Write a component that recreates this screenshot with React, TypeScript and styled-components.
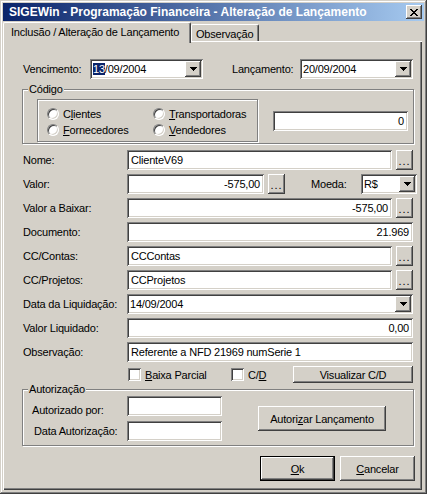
import React from "react";
import styled, { createGlobalStyle, css } from "styled-components";

const FACE = "#d4d0c8";
const FONT = `"Liberation Sans", Arial, Helvetica, sans-serif`;

const Global = createGlobalStyle`
  html, body { margin: 0; padding: 0; background: ${FACE}; }
  body { font-family: ${FONT}; font-size: 11px; color: #000; letter-spacing: -0.2px; }
  * { box-sizing: border-box; }
  u { text-decoration: underline; text-underline-offset: 1px; }
`;

const sunken = css`
  background: #fff;
  box-shadow: inset 1px 1px #808080, inset -1px -1px #fff, inset 2px 2px #404040,
    inset -2px -2px ${FACE};
`;

const raised = css`
  background: ${FACE};
  box-shadow: inset -1px -1px #404040, inset 1px 1px #fff, inset -2px -2px #808080;
`;

const etched = css`
  border: 1px solid #808080;
  box-shadow: inset 1px 1px #fff, 1px 1px #fff;
`;

const Window = styled.div`
  width: 427px;
  height: 494px;
  padding: 3px;
  background: ${FACE};
  box-shadow: inset -1px -1px #404040, inset 1px 1px ${FACE}, inset -2px -2px #808080,
    inset 2px 2px #fff;
  display: flex;
  flex-direction: column;
`;

const TitleBar = styled.div`
  height: 18px;
  margin-bottom: 1px;
  display: flex;
  align-items: center;
  padding: 0 2px 0 6px;
  background: linear-gradient(to right, #0a246a, #a6caf0);
`;

const TitleText = styled.span`
  flex: 1;
  color: #fff;
  font-weight: bold;
  font-size: 12px;
  letter-spacing: 0;
  white-space: nowrap;
`;

const CloseButton = styled.span`
  ${raised};
  width: 16px;
  height: 14px;
  display: flex;
  align-items: center;
  justify-content: center;
  padding: 0 1px 0 0;
`;

const Body = styled.div`
  flex: 1;
  display: flex;
  flex-direction: column;
  padding: 0 2px 1px 0;
`;

const TabStrip = styled.div`
  height: 19px;
  display: flex;
  align-items: flex-end;
  position: relative;
  z-index: 2;
`;

const Tab = styled.div<{ $active?: boolean; $w: number }>`
  width: ${(p) => p.$w}px;
  height: ${(p) => (p.$active ? 21 : 17)}px;
  margin-bottom: ${(p) => (p.$active ? -2 : 0)}px;
  background: ${FACE};
  border-top: 1px solid #fff;
  border-left: 1px solid #fff;
  border-right: 1px solid #404040;
  border-radius: 2px 2px 0 0;
  box-shadow: inset -1px 0 #808080;
  display: flex;
  align-items: center;
  padding: ${(p) => (p.$active ? "0 0 2px 7px" : "1px 0 0 4px")};
  white-space: nowrap;
`;

const TabPanel = styled.div`
  flex: 1;
  position: relative;
  z-index: 1;
  background: ${FACE};
  box-shadow: inset 1px 1px #fff, inset -1px -1px #404040, inset -2px -2px #808080;
  padding: 18px 7px 0 19px;
  display: flex;
  flex-direction: column;
`;

const TopRow = styled.div`
  height: 20px;
  display: flex;
  align-items: center;
  padding-right: 2px;
`;

const Label = styled.span<{ $w?: number; $ml?: number; $dy?: number; $pl?: number }>`
  ${(p) => (p.$w ? `width: ${p.$w}px; flex: none;` : "")}
  margin-left: ${(p) => p.$ml ?? 0}px;
  padding-left: ${(p) => p.$pl ?? 1}px;
  padding-top: ${(p) => p.$dy ?? 0}px;
  display: flex;
  align-items: center;
  white-space: nowrap;
`;

const ComboBox = styled.div<{ $w?: number }>`
  ${sunken};
  ${(p) => (p.$w ? `width: ${p.$w}px; flex: none;` : "flex: 1;")}
  height: 20px;
  padding: 2px;
  display: flex;
  align-items: center;
`;

const ComboText = styled.span`
  flex: 1;
  padding-left: 1px;
  white-space: nowrap;
  overflow: hidden;
`;

const Selected = styled.span`
  background: #0a246a;
  color: #fff;
`;

const DropButton = styled.span`
  ${raised};
  width: 16px;
  height: 16px;
  flex: none;
  display: flex;
  align-items: center;
  justify-content: center;
`;

const GroupBox = styled.div<{ $mt: number }>`
  ${etched};
  position: relative;
  margin-top: ${(p) => p.$mt}px;
  margin-right: 1px;
`;

const GroupCaption = styled.span`
  position: absolute;
  top: -7px;
  left: 5px;
  padding: 0 1px;
  line-height: 13px;
  background: ${FACE};
`;

const CodeBody = styled.div`
  display: flex;
  align-items: center;
  padding: 9px 0 1px 14px;
`;

const RadioBox = styled.div`
  ${etched};
  width: 221px;
  height: 43px;
  padding: 6px 0 0 9px;
  display: grid;
  grid-template-columns: 106px 1fr;
  grid-auto-rows: 16px;
`;

const RadioItem = styled.label`
  display: flex;
  align-items: center;
  gap: 4px;
  white-space: nowrap;
`;

const RadioCircle = styled.span`
  width: 12px;
  height: 12px;
  flex: none;
  border-radius: 50%;
  background: #fff;
  border: 1px solid;
  border-color: #808080 #fff #fff #808080;
  box-shadow: inset 1px 1px #404040, inset -1px -1px ${FACE};
`;

const TextBox = styled.div<{ $w?: number; $right?: boolean; $h?: number }>`
  ${sunken};
  ${(p) => (p.$w ? `width: ${p.$w}px; flex: none;` : "flex: 1;")}
  height: ${(p) => p.$h ?? 20}px;
  padding: 0 4px;
  display: flex;
  align-items: center;
  justify-content: ${(p) => (p.$right ? "flex-end" : "flex-start")};
  white-space: nowrap;
  overflow: hidden;
`;

const CodeInput = styled(TextBox)`
  margin-left: 15px;
`;

const FieldGrid = styled.div`
  margin-top: 6px;
  padding-right: 2px;
  display: grid;
  grid-template-columns: 105px 1fr;
  grid-auto-rows: 20px;
  row-gap: 4px;
`;

const FieldControls = styled.div<{ $gap?: number }>`
  display: flex;
  align-items: center;
  gap: ${(p) => p.$gap ?? 4}px;
  min-width: 0;
`;

const Button = styled.button<{ $w: number; $h: number; $default?: boolean; $ml?: number }>`
  ${raised};
  width: ${(p) => p.$w}px;
  height: ${(p) => p.$h}px;
  flex: none;
  margin-left: ${(p) => p.$ml ?? 0}px;
  border: ${(p) => (p.$default ? "1px solid #000" : "none")};
  padding: 0;
  font: inherit;
  letter-spacing: inherit;
  color: #000;
  display: flex;
  align-items: center;
  justify-content: center;
  white-space: nowrap;
`;

const EllipsisButton = styled(Button)`
  align-items: flex-end;
  padding-bottom: 4px;
  letter-spacing: 1px;
  line-height: 10px;
`;

const CheckRow = styled.div`
  display: flex;
  align-items: flex-start;
  height: 20px;
`;

const CheckItem = styled.label<{ $w: number; $pl?: number }>`
  width: ${(p) => p.$w}px;
  height: 17px;
  padding-left: ${(p) => p.$pl ?? 0}px;
  display: flex;
  align-items: center;
  gap: 4px;
  white-space: nowrap;
`;

const CheckBox = styled.span`
  ${sunken};
  width: 13px;
  height: 13px;
  flex: none;
`;

const AuthBody = styled.div`
  display: flex;
  align-items: center;
  padding: 6px 0 4px 9px;
`;

const AuthGrid = styled.div`
  display: grid;
  grid-template-columns: 95px 95px;
  grid-auto-rows: 20px;
  row-gap: 5px;
`;

const DialogButtons = styled.div`
  margin-top: 10px;
  display: flex;
  justify-content: flex-end;
  gap: 5px;
`;

const CloseGlyph = () => (
  <svg width="8" height="7" viewBox="0 0 8 7" shapeRendering="crispEdges">
    <path
      fill="#000"
      d="M0 0h2v1H0z M6 0h2v1H6z M1 1h2v1H1z M5 1h2v1H5z M2 2h4v1H2z M3 3h2v1H3z M2 4h4v1H2z M1 5h2v1H1z M5 5h2v1H5z M0 6h2v1H0z M6 6h2v1H6z"
    />
  </svg>
);

const Arrow = () => (
  <svg width="7" height="4" viewBox="0 0 7 4" shapeRendering="crispEdges">
    <path fill="#000" d="M0 0h7v1H0z M1 1h5v1H1z M2 2h3v1H2z M3 3h1v1H3z" />
  </svg>
);

const Combo: React.FC<{ w?: number; children: React.ReactNode }> = ({ w, children }) => (
  <ComboBox $w={w}>
    <ComboText>{children}</ComboText>
    <DropButton>
      <Arrow />
    </DropButton>
  </ComboBox>
);

const Dots = () => (
  <EllipsisButton $w={17} $h={20}>
    ...
  </EllipsisButton>
);

export default function App() {
  return (
    <>
      <Global />
      <Window>
        <TitleBar>
          <TitleText>SIGEWin - Programação Financeira - Alteração de Lançamento</TitleText>
          <CloseButton>
            <CloseGlyph />
          </CloseButton>
        </TitleBar>
        <Body>
          <TabStrip>
            <Tab $active $w={188}>
              Inclusão / Alteração de Lançamento
            </Tab>
            <Tab $w={68}>Observação</Tab>
          </TabStrip>
          <TabPanel>
            <TopRow>
              <Label $w={68}>Vencimento:</Label>
              <Combo w={113}>
                <Selected>13</Selected>/09/2004
              </Combo>
              <Label $w={69} $ml={28}>
                Lançamento:
              </Label>
              <Combo w={113}>20/09/2004</Combo>
            </TopRow>

            <GroupBox $mt={10}>
              <GroupCaption>Código</GroupCaption>
              <CodeBody>
                <RadioBox>
                  <RadioItem>
                    <RadioCircle />
                    <span>
                      C<u>l</u>ientes
                    </span>
                  </RadioItem>
                  <RadioItem>
                    <RadioCircle />
                    <span>
                      <u>T</u>ransportadoras
                    </span>
                  </RadioItem>
                  <RadioItem>
                    <RadioCircle />
                    <span>
                      <u>F</u>ornecedores
                    </span>
                  </RadioItem>
                  <RadioItem>
                    <RadioCircle />
                    <span>
                      <u>V</u>endedores
                    </span>
                  </RadioItem>
                </RadioBox>
                <CodeInput $w={135} $right>
                  0
                </CodeInput>
              </CodeBody>
            </GroupBox>

            <FieldGrid>
              <Label>Nome:</Label>
              <FieldControls>
                <TextBox>ClienteV69</TextBox>
                <Dots />
              </FieldControls>

              <Label>Valor:</Label>
              <FieldControls>
                <TextBox $w={137} $right>
                  -575,00
                </TextBox>
                <Dots />
                <Label $w={46} $ml={22} $pl={0}>
                  Moeda:
                </Label>
                <Combo w={56}>R$</Combo>
              </FieldControls>

              <Label>Valor a Baixar:</Label>
              <FieldControls>
                <TextBox $right>-575,00</TextBox>
                <Dots />
              </FieldControls>

              <Label>Documento:</Label>
              <FieldControls>
                <TextBox $right>21.969</TextBox>
              </FieldControls>

              <Label>CC/Contas:</Label>
              <FieldControls>
                <TextBox>CCContas</TextBox>
                <Dots />
              </FieldControls>

              <Label>CC/Projetos:</Label>
              <FieldControls>
                <TextBox>CCProjetos</TextBox>
                <Dots />
              </FieldControls>

              <Label>Data da Liquidação:</Label>
              <FieldControls>
                <Combo>14/09/2004</Combo>
              </FieldControls>

              <Label>Valor Liquidado:</Label>
              <FieldControls>
                <TextBox $right>0,00</TextBox>
              </FieldControls>

              <Label>Observação:</Label>
              <FieldControls>
                <TextBox>Referente a NFD 21969 numSerie 1</TextBox>
              </FieldControls>

              <span />
              <CheckRow>
                <CheckItem $w={104} $pl={1}>
                  <CheckBox />
                  <span>
                    <u>B</u>aixa Parcial
                  </span>
                </CheckItem>
                <CheckItem $w={62}>
                  <CheckBox />
                  <span>
                    C/<u>D</u>
                  </span>
                </CheckItem>
                <Button $w={120} $h={17}>
                  Visualizar C/D
                </Button>
              </CheckRow>
            </FieldGrid>

            <GroupBox $mt={3}>
              <GroupCaption>Autorização</GroupCaption>
              <AuthBody>
                <AuthGrid>
                  <Label $pl={0} $dy={8}>
                    Autorizado por:
                  </Label>
                  <TextBox $w={95} />
                  <Label $pl={2}>Data Autorização:</Label>
                  <TextBox $w={95} />
                </AuthGrid>
                <Button $w={128} $h={25} $ml={36}>
                  Autori<u>z</u>ar Lançamento
                </Button>
              </AuthBody>
            </GroupBox>

            <DialogButtons>
              <Button $w={75} $h={25} $default>
                <u>O</u>k
              </Button>
              <Button $w={75} $h={25}>
                <u>C</u>ancelar
              </Button>
            </DialogButtons>
          </TabPanel>
        </Body>
      </Window>
    </>
  );
}
